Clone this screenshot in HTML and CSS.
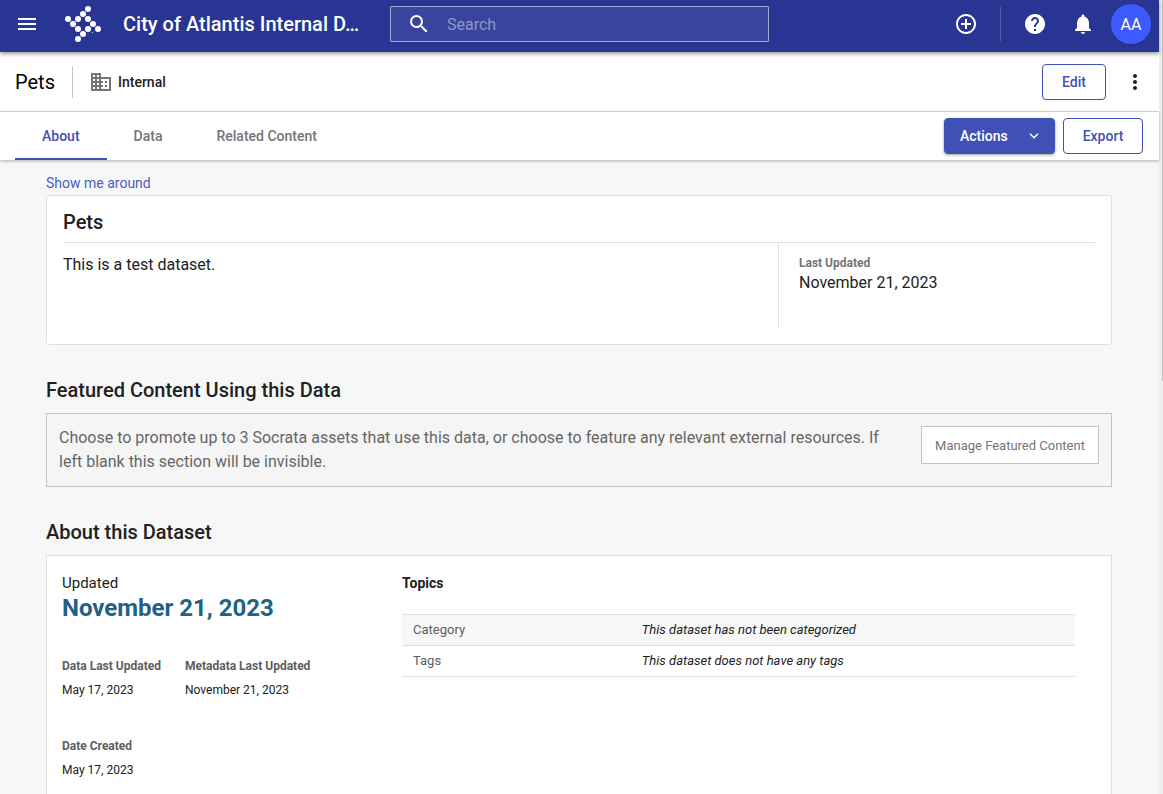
FILE: index.html
```html
<!DOCTYPE html>
<html lang="en">
<head>
<meta charset="utf-8">
<title>Pets</title>
<link rel="stylesheet" href="styles.css">
</head>
<body>
<div class="app">
  <div class="page">
    <header class="topbar">
      <button class="icon-btn menu-btn" aria-label="Menu"><svg width="18" height="12" viewBox="0 0 18 12" fill="#fff"><path d="M0 0h18v2H0zM0 5h18v2H0zM0 10h18v2H0z"/></svg></button>
      <svg class="logo" width="36" height="36" viewBox="0 0 36 36" fill="#fff">
        <circle cx="23" cy="3" r="3"/><circle cx="18" cy="8" r="3"/><circle cx="13" cy="13" r="3"/><circle cx="23" cy="13" r="3"/>
        <circle cx="3" cy="13" r="3"/><circle cx="8" cy="18" r="3"/><circle cx="28" cy="18" r="3"/><circle cx="13" cy="23" r="3"/>
        <circle cx="23" cy="23" r="3"/><circle cx="33" cy="23" r="3"/><circle cx="18" cy="28" r="3"/><circle cx="13" cy="33" r="3"/>
        <circle cx="27.5" cy="26.5" r=".5"/>
      </svg>
      <div class="site-name">City of Atlantis Internal D…</div>
      <label class="search">
        <svg width="24" height="24" viewBox="0 0 24 24" fill="#fff"><path d="M15.5 14h-.79l-.28-.27A6.471 6.471 0 0 0 16 9.5 6.5 6.5 0 1 0 9.5 16c1.61 0 3.09-.59 4.23-1.57l.27.28v.79l5 4.99L20.49 19l-4.99-5zm-6 0C7.01 14 5 11.99 5 9.500S7.010 5 9.500 5 14 7.010 14 9.500 11.990 14 9.500 14z"/></svg>
        <input class="search-input" type="text" placeholder="Search" aria-label="Search">
      </label>
      <div class="tools">
        <button class="icon-btn" aria-label="Create"><svg width="24" height="24" viewBox="0 0 24 24" fill="#fff"><path d="M13 7h-2v4H7v2h4v4h2v-4h4v-2h-4V7zm-1-5C6.480 2 2 6.480 2 12s4.480 10 10 10 10-4.480 10-10S17.520 2 12 2zm0 18c-4.410 0-8-3.590-8-8s3.590-8 8-8 8 3.590 8 8-3.590 8-8 8z"/></svg></button>
        <span class="tools-divider"></span>
        <button class="icon-btn" aria-label="Help"><svg width="24" height="24" viewBox="0 0 24 24" fill="#fff"><path d="M12 2C6.480 2 2 6.480 2 12s4.480 10 10 10 10-4.480 10-10S17.520 2 12 2zm1 17h-2v-2h2v2zm2.070-7.750l-.9.920C13.450 12.900 13 13.500 13 15h-2v-.5c0-1.100.45-2.100 1.170-2.830l1.240-1.260c.37-.36.59-.86.59-1.410 0-1.100-.9-2-2-2s-2 .9-2 2H8c0-2.210 1.790-4 4-4s4 1.790 4 4c0 .88-.36 1.680-.93 2.250z"/></svg></button>
        <button class="icon-btn bell" aria-label="Notifications"><svg width="24" height="24" viewBox="0 0 24 24" fill="#fff"><path d="M12 22c1.100 0 2-.9 2-2h-4c0 1.100.89 2 2 2zm6-6v-5c0-3.070-1.640-5.640-4.500-6.320V4c0-.83-.67-1.500-1.500-1.500s-1.500.67-1.500 1.500v.68C7.630 5.360 6 7.920 6 11v5l-2 2v1h16v-1l-2-2z"/></svg></button>
        <button class="avatar">AA</button>
      </div>
    </header>

    <div class="titlebar">
      <div class="asset-name">Pets</div>
      <div class="audience">
        <svg width="24" height="24" viewBox="0 0 24 24" fill="#757575"><path d="M12 7V3H2v18h20V7H12zM6 19H4v-2h2v2zm0-4H4v-2h2v2zm0-4H4V9h2v2zm0-4H4V5h2v2zm4 12H8v-2h2v2zm0-4H8v-2h2v2zm0-4H8V9h2v2zm0-4H8V5h2v2zm10 12h-8v-2h2v-2h-2v-2h2v-2h-2V9h8v10zm-2-8h-2v2h2v-2zm0 4h-2v2h2v-2z"/></svg>
        <span>Internal</span>
      </div>
      <button class="btn edit-btn">Edit</button>
      <button class="icon-btn more-btn" aria-label="More"><svg width="24" height="24" viewBox="0 0 24 24" fill="#212121"><path d="M12 8c1.100 0 2-.9 2-2s-.9-2-2-2-2 .9-2 2 .9 2 2 2zm0 2c-1.100 0-2 .9-2 2s.9 2 2 2 2-.9 2-2-.9-2-2-2zm0 6c-1.100 0-2 .9-2 2s.9 2 2 2 2-.9 2-2-.9-2-2-2z"/></svg></button>
    </div>

    <div class="tabbar">
      <nav class="tabs">
        <a class="tab active" href="#about">About</a>
        <a class="tab" href="#data">Data</a>
        <a class="tab" href="#related">Related Content</a>
      </nav>
      <button class="btn btn-primary">Actions<svg width="10" height="6" viewBox="0 0 10 6" fill="none" stroke="#fff" stroke-width="1.500"><path d="M1 .7l4 4 4-4"/></svg></button>
      <button class="btn export-btn">Export</button>
    </div>

    <main class="content" id="about">
      <a class="tour-link" href="#tour">Show me around</a>
      <section class="card summary">
        <h1 class="summary-title">Pets</h1>
        <div class="summary-body">
          <p class="description">This is a test dataset.</p>
          <dl class="updated">
            <dt>Last Updated</dt>
            <dd>November 21, 2023</dd>
          </dl>
        </div>
      </section>

      <h2 class="section-title">Featured Content Using this Data</h2>
      <section class="featured">
        <p class="featured-text">Choose to promote up to 3 Socrata assets that use this data, or choose to feature any relevant external resources. If left blank this section will be invisible.</p>
        <button class="manage-btn">Manage Featured Content</button>
      </section>

      <h2 class="section-title">About this Dataset</h2>
      <section class="about">
        <div class="dates">
          <div class="dates-label">Updated</div>
          <div class="dates-main">November 21, 2023</div>
          <div class="date-grid">
            <dl class="date"><dt>Data Last Updated</dt><dd>May 17, 2023</dd></dl>
            <dl class="date"><dt>Metadata Last Updated</dt><dd>November 21, 2023</dd></dl>
            <dl class="date"><dt>Date Created</dt><dd>May 17, 2023</dd></dl>
          </div>
        </div>
        <div class="topics">
          <h3 class="topics-title">Topics</h3>
          <table class="topics-table">
            <tr><th scope="row">Category</th><td>This dataset has not been categorized</td></tr>
            <tr><th scope="row">Tags</th><td>This dataset does not have any tags</td></tr>
          </table>
        </div>
      </section>
    </main>
  </div>
  <div class="scroll-track"><div class="scroll-thumb"></div></div>
</div>
</body>
</html>
```

FILE: styles.css
```css
* { box-sizing: border-box; }

body, h1, h2, h3, p, dl, dd { margin: 0; }

body {
  font-family: Roboto, "Liberation Sans", sans-serif;
  color: #212121;
  background: #f7f7f7;
}

button, input { font-family: inherit; }
a { text-decoration: none; }

.app { display: flex; height: 100vh; overflow: hidden; }
.page { flex: 1; min-width: 0; display: flex; flex-direction: column; }

.scroll-track { width: 4px; background: #efefef; padding-left: 3px; }
.scroll-thumb { height: 48%; background: #bdbdbd; }

.icon-btn {
  display: flex;
  align-items: center;
  justify-content: center;
  padding: 0;
  border: 0;
  background: none;
}

/* Top bar */
.topbar {
  display: flex;
  align-items: center;
  flex: none;
  height: 52px;
  padding: 0 8px 4px 18px;
  background: #283593;
  box-shadow: 0 2px 4px rgba(0, 0, 0, .4);
  position: relative;
  z-index: 2;
}
.logo { flex: none; margin-left: 29px; }
.site-name {
  flex: none;
  width: 245px;
  margin: 0 22px;
  font-size: 20px;
  line-height: 28px;
  font-weight: 500;
  color: #fff;
  white-space: nowrap;
}
.search {
  display: flex;
  align-items: center;
  width: 379px;
  height: 36px;
  padding: 0 16px;
  gap: 16px;
  border: 1px solid #a5abd6;
  border-radius: 1px;
  background: #39459c;
}
.search svg { flex: none; }
.search-input {
  flex: 1;
  min-width: 0;
  padding: 0;
  border: 0;
  outline: 0;
  background: none;
  color: #fff;
  font-size: 16px;
}
.search-input::placeholder { color: #8f96c6; opacity: 1; }
.tools { display: flex; align-items: center; margin-left: auto; }
.tools-divider { width: 1px; height: 34px; margin: 0 22px; background: #5660a9; }
.bell { margin: 0 16px 0 24px; }
.avatar {
  width: 40px;
  height: 40px;
  padding: 0;
  border: 0;
  border-radius: 50%;
  background: #3d5afe;
  color: #fff;
  font-size: 16px;
}

/* Title bar */
.titlebar {
  display: flex;
  align-items: center;
  flex: none;
  height: 60px;
  padding: 0 12px 0 15px;
  background: #fff;
  border-bottom: 1px solid #d6d6d6;
}
.asset-name { font-size: 20px; line-height: 32px; color: #000; padding-right: 17px; }
.audience {
  display: flex;
  align-items: center;
  gap: 5px;
  height: 32px;
  padding-left: 16px;
  border-left: 1px solid #c4c4c4;
  font-size: 14px;
  font-weight: 500;
}

.btn {
  height: 36px;
  padding: 0 15px;
  border: 1px solid #3f51b5;
  border-radius: 4px;
  background: #fff;
  color: #3f51b5;
  font-size: 14px;
  font-weight: 500;
}
.edit-btn { min-width: 64px; margin-left: auto; }
.more-btn { margin-left: 17px; }

/* Tabs */
.tabbar {
  display: flex;
  align-items: center;
  flex: none;
  height: 48px;
  padding: 0 16px 0 15px;
  gap: 8px;
  background: #fff;
  box-shadow: 0 1px 3px rgba(0, 0, 0, .3);
  position: relative;
  z-index: 1;
}
.tabs { display: flex; align-self: stretch; margin-right: auto; }
.tab {
  display: flex;
  align-items: center;
  padding: 2px 27px 0;
  border-bottom: 2px solid transparent;
  color: #757575;
  font-size: 14px;
  font-weight: 500;
}
.tab.active { color: #3f51b5; border-color: #3f51b5; }
.btn-primary {
  display: flex;
  align-items: center;
  justify-content: space-between;
  min-width: 111px;
  background: #3f51b5;
  color: #fff;
  box-shadow: 0 1px 3px rgba(0, 0, 0, .4);
}
.export-btn { min-width: 80px; }

/* Content */
.content {
  flex: 1;
  display: flex;
  flex-direction: column;
  padding: 13px 47px 0 46px;
}
.tour-link { font-size: 14px; line-height: 20px; color: #4b5cc4; margin-bottom: 2px; }

.card { background: #fff; border: 1px solid #e0e0e0; border-radius: 3px; }
.summary { flex: none; padding: 10px 16px 16px; }
.summary-title {
  padding-bottom: 4px;
  border-bottom: 1px solid #e0e0e0;
  font-size: 20px;
  line-height: 32px;
  font-weight: 500;
}
.summary-body { display: grid; grid-template-columns: 715fr 317fr; min-height: 85px; }
.description { padding-top: 10px; font-size: 16px; line-height: 24px; }
.updated { padding: 12px 20px 0; border-left: 1px solid #e0e0e0; }
.updated dt { font-size: 12px; line-height: 16px; font-weight: 700; color: #757575; }
.updated dd { font-size: 16px; line-height: 24px; }

.section-title { margin: 32px 0 10px; font-size: 20px; line-height: 26px; font-weight: 500; }

.featured {
  display: flex;
  align-items: flex-start;
  justify-content: space-between;
  flex: none;
  gap: 32px;
  padding: 12px;
  border: 1px solid #c4c4c4;
  background: #f5f5f5;
}
.featured-text { flex: 1; font-size: 16px; line-height: 24px; color: #666; }
.manage-btn {
  flex: none;
  min-width: 178px;
  height: 38px;
  padding: 0 13px;
  border: 1px solid #c4c4c4;
  background: #fff;
  color: #757575;
  font-size: 13px;
}

.about {
  flex: 1;
  display: grid;
  grid-template-columns: 340px 1fr;
  padding: 15px 36px 16px 15px;
  background: #fff;
  border: 1px solid #e0e0e0;
  border-bottom: 0;
}
.dates-label { font-size: 15px; line-height: 24px; }
.dates-main { font-size: 24px; line-height: 26px; font-weight: 700; color: #1f6286; }
.date-grid {
  display: grid;
  grid-template-columns: 107px 1fr;
  gap: 32px 16px;
  margin-top: 33px;
  font-size: 12px;
  line-height: 24px;
}
.date dt { font-weight: 700; color: #5e5e5e; }

.topics-title { font-size: 14px; line-height: 24px; font-weight: 700; }
.topics-table {
  width: 100%;
  margin-top: 19px;
  border-collapse: collapse;
  font-size: 13px;
  line-height: 20px;
}
.topics-table tr { border-top: 1px solid #e0e0e0; border-bottom: 1px solid #e0e0e0; }
.topics-table tr:first-child { background: #f7f7f7; }
.topics-table th, .topics-table td { padding: 5px 11px; text-align: left; }
.topics-table th { width: 34%; font-weight: 400; color: #5e5e5e; }
.topics-table td { font-style: italic; }
```
